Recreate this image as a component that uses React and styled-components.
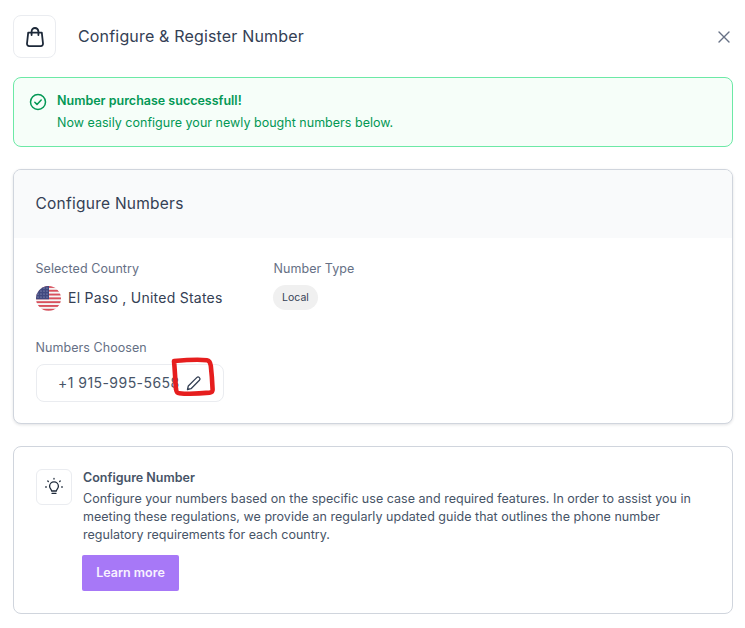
import React from "react";
import styled, { createGlobalStyle } from "styled-components";

const Global = createGlobalStyle`
  html, body { margin: 0; padding: 0; background: #fff; }
  body { font-family: Inter, "Liberation Sans", sans-serif; }
`;
const Page = styled.div`
  width: 745px; height: 628px; box-sizing: border-box; padding: 15px 12px 0 13px; overflow: hidden;
  display: flex; flex-direction: column;
`;
const Header = styled.header`
  display: flex; align-items: center; height: 43px; margin-bottom: 19px; padding-right: 2px;
`;
const IconTile = styled.div`
  width: ${p => p.$size}px; height: ${p => p.$size}px; box-sizing: border-box; flex: none;
  border: 1px solid #eaecf0; border-radius: ${p => p.$radius}px; background: #fff;
  display: flex; align-items: center; justify-content: center;
`;
const Title = styled.h1`
  margin: -1px 0 0 22px; flex: 1; font-size: 16px; font-weight: 400; line-height: 24px; color: #344054; letter-spacing: 0.17px;
`;
const Close = styled.button`
  border: 0; background: none; padding: 0; display: flex; color: #667085;
`;
const Alert = styled.section`
  height: 70px; box-sizing: border-box; border: 1px solid #6ce9a6; border-radius: 8px; background: #f6fef9;
  padding: 14px 15px; display: flex; gap: 10px; color: #039855; margin-bottom: 22px;
`;
const AlertIcon = styled.div` padding-top: 1px; display: flex; align-items: flex-start; `;
const AlertTitle = styled.div` font-size: 12.5px; font-weight: 600; line-height: 18px; `;
const AlertText = styled.div` font-size: 12.5px; line-height: 18px; margin-top: 4px; letter-spacing: 0.02px; `;
const Card = styled.section`
  height: 255px; box-sizing: border-box; border: 1px solid #d0d5dd; border-radius: 8px; background: #fff;
  box-shadow: 0 1px 3px rgba(16,24,40,.12); overflow: hidden; margin-bottom: 22px;
`;
const CardHead = styled.div`
  height: 68px; box-sizing: border-box; padding: 0 22px 1px 21.5px; background: #f9fafb; display: flex; align-items: center;
  font-size: 15.5px; font-weight: 400; color: #344054; letter-spacing: 0.25px;
`;
const CardBody = styled.div` padding: 22px 22px 0; `;
const Row = styled.div` display: flex; height: 79px; `;
const Col = styled.div` width: 238px; display: flex; flex-direction: column; align-items: flex-start; `;
const Label = styled.div`
  margin: 0 0 ${p => p.$gap}px -0.5px; font-size: 12.5px; line-height: 18px; color: #667085; letter-spacing: 0.06px;
`;
const Country = styled.div`
  display: flex; align-items: center; gap: 7px; margin-top: 1px; font-size: 14px; line-height: 26px; color: #344054; letter-spacing: 0.25px;
`;
const Badge = styled.span`
  height: 25px; width: 45px; margin-left: -1px; border-radius: 13px; background: #f0f0f0; color: #344054; font-size: 10.5px;
  display: flex; align-items: center; justify-content: center;
`;
const NumberChip = styled.div`
  position: relative; width: 188px; height: 38px; box-sizing: border-box; border: 1px solid #eaecf0; border-radius: 8px;
  padding: 0 0 2px 21px; display: flex; align-items: center; font-size: 14px; color: #475467; letter-spacing: 0.45px;
`;
const EditIcon = styled.span` position: absolute; left: 149px; top: 10px; display: flex; color: #344054; `;
const Scribble = styled.svg` position: absolute; left: 135px; top: -7px; overflow: visible; `;
const Info = styled.section`
  height: 168px; box-sizing: border-box; border: 1px solid #d0d5dd; border-radius: 8px; padding: 22px 22px 0;
  display: flex; gap: 11px;
`;
const InfoMain = styled.div` flex: 1; display: flex; flex-direction: column; align-items: flex-start; `;
const InfoTitle = styled.div` font-size: 12.5px; font-weight: 600; line-height: 18px; color: #475467; `;
const InfoText = styled.p`
  margin: 3px 0 0; font-size: 12.5px; line-height: 18px; color: #475467; letter-spacing: 0.02px;
`;
const Learn = styled.button`
  margin: 11px 0 0 -1px; width: 97px; height: 36px; border: 0; border-radius: 2px; background: #a778f7; color: #f8f2ff;
  font: 600 12.5px Inter, sans-serif; padding: 0 0 2px;
`;

const Flag = () => (
  <svg width="25" height="25" viewBox="0 0 25 25">
    <defs><clipPath id="c"><circle cx="12.5" cy="12.5" r="12.5" /></clipPath></defs>
    <g clipPath="url(#c)">
      <rect width="25" height="25" fill="#f5f5f5" />
      {[0, 3.8, 7.6, 11.4, 15.2, 19, 22.8].map(y => <rect key={y} y={y} width="25" height="1.9" fill="#d8505c" />)}
      <rect width="13" height="13.3" fill="#41497f" />
      {[2, 5, 8, 11].map(y => [2, 5, 8, 11].map(x => <circle key={x + "-" + y} cx={x} cy={y} r=".6" fill="#aeb3d2" />))}
    </g>
  </svg>
);

export default function App() {
  return (
    <Page>
      <Global />
      <Header>
        <IconTile $size={43} $radius={8}>
          <svg width="20" height="20" viewBox="0 0 20 20" fill="none" stroke="#1d2939" strokeWidth="1.8" strokeLinecap="round" strokeLinejoin="round">
            <path d="M3.200 5.600h13.600l1.200 10.900a2.300 2.300 0 0 1-2.300 2.600H4.300A2.300 2.300 0 0 1 2 16.500z" />
            <path d="M6.600 8V4.400a3.400 3.400 0 0 1 6.800 0V8" />
          </svg>
        </IconTile>
        <Title>Configure &amp; Register Number</Title>
        <Close aria-label="Close">
          <svg width="14" height="14" viewBox="0 0 14 14" fill="none" stroke="currentColor" strokeWidth="1.4" strokeLinecap="round">
            <path d="M2 2l10 10M12 2L2 12" />
          </svg>
        </Close>
      </Header>
      <Alert>
        <AlertIcon>
          <svg width="18" height="18" viewBox="0 0 18 18" fill="none" stroke="#039855" strokeWidth="1.5" strokeLinecap="round" strokeLinejoin="round">
            <circle cx="9" cy="9" r="7.5" />
            <path d="M5.800 9.200l2.200 2.200 4.200-4.400" />
          </svg>
        </AlertIcon>
        <div>
          <AlertTitle>Number purchase successfull!</AlertTitle>
          <AlertText>Now easily configure your newly bought numbers below.</AlertText>
        </div>
      </Alert>
      <Card>
        <CardHead>Configure Numbers</CardHead>
        <CardBody>
          <Row>
            <Col>
              <Label $gap={6}>Selected Country</Label>
              <Country><Flag />El Paso , United States</Country>
            </Col>
            <Col>
              <Label $gap={7}>Number Type</Label>
              <Badge>Local</Badge>
            </Col>
          </Row>
          <Label $gap={7}>Numbers Choosen</Label>
          <NumberChip>
            +1 915-995-5658
            <EditIcon>
              <svg width="16" height="16" viewBox="0 0 16 16" fill="none" stroke="currentColor" strokeWidth="1.3" strokeLinejoin="round" strokeLinecap="round">
                <path d="M1.500 14.500l.8-3.500 8.400-8.400a1.700 1.700 0 0 1 2.700 2.700L5 13.700z" />
              </svg>
            </EditIcon>
            <Scribble width="46" height="40" viewBox="0 0 46 40" fill="none" stroke="#e61e1e" strokeWidth="4.6" strokeLinecap="round" strokeLinejoin="round">
              <path d="M2 3c9-.8 26-1.600 33-.8 2.400.3 3.300 1.800 3.800 5.600.7 6 1.500 17 1.800 23.500.1 2.400-.6 3-3 3.300-7 .7-24 1.300-30.500.6-2 0-2.600-1-3.100-4C3.400 25 2.900 12 2 3z" />
            </Scribble>
          </NumberChip>
        </CardBody>
      </Card>
      <Info>
        <IconTile $size={36} $radius={6}>
          <svg width="20" height="20" viewBox="0 0 20 20" fill="none" stroke="#1d2939" strokeWidth="1.3" strokeLinecap="round" strokeLinejoin="round">
            <path d="M7.600 14c0-1.500-2-2.300-2-4.700a4.400 4.400 0 0 1 8.800 0c0 2.400-2 3.200-2 4.700z" />
            <path d="M8 16.300h4" />
            <path d="M10 1.500v.6M3.800 4l.5.5M16.200 4l-.5.5M1.700 10h.6M17.700 10h.6" />
          </svg>
        </IconTile>
        <InfoMain>
          <InfoTitle>Configure Number</InfoTitle>
          <InfoText>
            Configure your numbers based on the specific use case and required features. In order to assist you in meeting these regulations, we provide an regularly updated guide that outlines the phone number regulatory requirements for each country.
          </InfoText>
          <Learn>Learn more</Learn>
        </InfoMain>
      </Info>
    </Page>
  );
}
